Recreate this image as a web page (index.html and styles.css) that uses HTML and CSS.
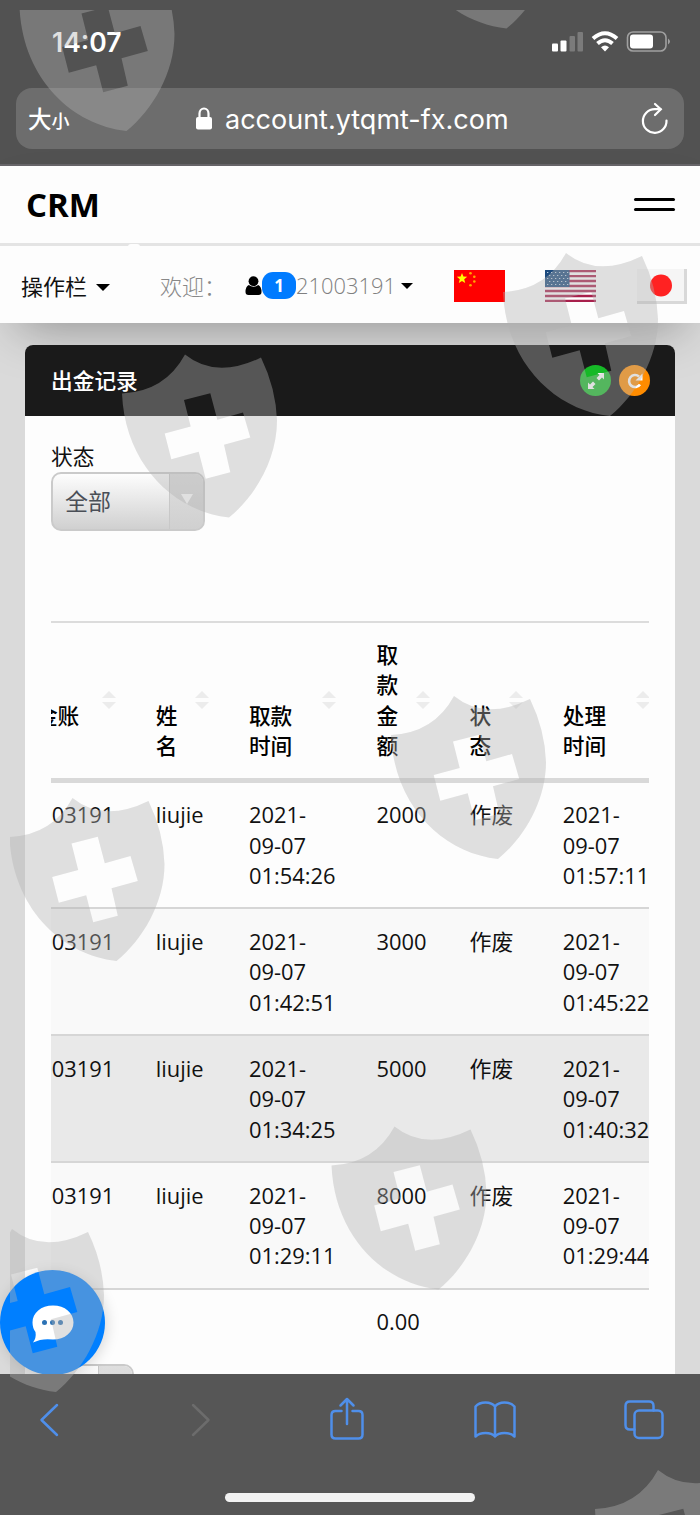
FILE: index.html
```html
<!DOCTYPE html>
<html lang="zh-CN">

<head>
    <meta charset="UTF-8" />
    <title>CRM - 出金记录</title>
    <meta name="viewport" content="width=device-width, initial-scale=1.0" />
    <link rel="stylesheet" href="styles.css">
</head>

<body>
    <div class="phone">
        <header class="browser-top">
            <div class="status-bar">
                <span class="clock">14:07</span>
                <svg class="status-icons" width="120" height="24" viewBox="0 0 120 24">
                    <rect x="2" y="13.500" width="6" height="8" rx="1" fill="#fff" />
                    <rect x="10.500" y="10.500" width="6" height="11" rx="1" fill="#fff" />
                    <rect x="19.500" y="6" width="5.500" height="15.500" rx="1" fill="#7b7b7b" />
                    <rect x="27.500" y="2" width="5.500" height="19.500" rx="1" fill="#7b7b7b" />
                    <g fill="none" stroke="#fff" stroke-width="4">
                        <path d="M43 8.500Q55 -2 67 8.500" />
                        <path d="M47.500 13.500Q55 7 62.500 13.500" />
                    </g>
                    <path d="M51 17.200Q55 14 59 17.200L55 21.500Z" fill="#fff" />
                    <rect x="77.500" y="2" width="38.500" height="19" rx="5.500" fill="none" stroke="#a0a0a0" stroke-width="1.600" />
                    <rect x="80" y="4.500" width="23" height="14" rx="3" fill="#fff" />
                    <path d="M118 8.500q4 3 0 6z" fill="#a0a0a0" />
                </svg>
            </div>
            <div class="address-bar">
                <span class="text-size">大<small>小</small></span>
                <div class="address">
                    <svg width="18" height="24" viewBox="0 0 18 24">
                        <path d="M4.500 11V6.500a4.500 5 0 0 1 9 0V11" fill="none" stroke="#fff" stroke-width="2.200" />
                        <rect x="1" y="10" width="16" height="12.500" rx="2" fill="#fff" />
                    </svg>
                    <span class="url">account.ytqmt-fx.com</span>
                </div>
                <svg class="reload" width="30" height="34" viewBox="0 0 30 34">
                    <g fill="none" stroke="#fff" stroke-width="2.200" stroke-linecap="round">
                        <path d="M26.500 18.500A11.800 11.800 0 1 1 14.700 7.200H20.500" />
                        <path d="M15 2L20.800 7.300L15 13" />
                    </g>
                </svg>
            </div>
        </header>

        <nav class="navbar">
            <div class="brand-row">
                <span class="brand">CRM</span>
                <div class="hamburger"><i></i><i></i></div>
            </div>
            <div class="menu-row">
                <span class="menu-item">操作栏<i class="caret"></i></span>
                <span class="welcome">欢迎：</span>
                <span class="user">
                    <svg width="17" height="20" viewBox="0 0 17 20">
                        <circle cx="8.500" cy="5.200" r="4.900" />
                        <path d="M3.800 9q4.700 3.500 9.400 0Q16.500 10.500 16.500 16q0 3-3 3h-10q-3 0-3-3Q.5 10.500 3.800 9z" />
                    </svg>
                    <b class="badge">1</b><span class="account">21003191</span><i class="caret"></i>
                </span>
                <div class="flags">
                    <svg width="51" height="32" viewBox="0 0 51 32">
                        <path fill="#f00" d="M0 0h51v32H0z" />
                        <path fill="#ff0" d="M8 3l1.400 3.600 3.800.2-3 2.400 1 3.800L8 10.900 4.800 13l1-3.800-3-2.400 3.800-.2z" />
                        <g fill="#ffa800">
                            <circle cx="16.500" cy="3.300" r="1.300" />
                            <circle cx="20.300" cy="6.800" r="1.300" />
                            <circle cx="20.300" cy="11.500" r="1.300" />
                            <circle cx="16.500" cy="15.300" r="1.300" />
                        </g>
                    </svg>
                    <svg width="51" height="32" viewBox="0 0 51 32">
                        <path fill="#fff" d="M0 0h51v32H0z" />
                        <path stroke="#a8204c" stroke-width="2.300" d="M0 1.200h51M0 6.100h51M0 11h51M0 16h51M0 21h51M0 26h51M0 30.900h51" />
                        <path fill="#1d4b7e" d="M0 0h24.500v17H0z" />
                        <path stroke="#b9cbdc" stroke-width="1.200" stroke-dasharray="1.300 2.700" d="M2 2.500h22M4 5.500h20M2 8.500h22M4 11.500h20M2 14.500h22" />
                    </svg>
                    <svg width="51" height="36" viewBox="0 0 51 36">
                        <path fill="#d8d8d8" d="M1 1h50v35H1z" />
                        <path fill="#f5f5f5" d="M1 1h47v32H1z" />
                        <circle cx="25" cy="17.500" r="11" fill="#f22" />
                    </svg>
                </div>
            </div>
        </nav>

        <main class="content">
            <section class="card">
                <div class="card-head">
                    <h1>出金记录</h1>
                    <div class="tools">
                        <span class="tool tool-expand">
                            <svg width="18" height="18" viewBox="0 0 18 18">
                                <path d="M10.500 1H17v6.500l-2-2-3 3-2.500-2.500 3-3zM7.500 17H1v-6.500l2 2 3-3L8.500 12l-3 3z" fill="#fff" />
                            </svg>
                        </span>
                        <span class="tool tool-reload">
                            <svg width="18" height="18" viewBox="0 0 18 18">
                                <path d="M14 12.500A6 6 0 1 1 13 4.500" fill="none" stroke="#fff" stroke-width="2.600" />
                                <path d="M16.500 1.500V8.500H9.500z" fill="#fff" />
                            </svg>
                        </span>
                    </div>
                </div>
                <div class="card-body">
                    <label class="filter-label">状态</label>
                    <div class="select"><span>全部</span><i></i></div>

                    <div class="table-wrap">
                        <table>
                            <colgroup>
                                <col class="c-account"><col class="c-short"><col class="c-time">
                                <col class="c-short"><col class="c-short"><col class="c-time">
                            </colgroup>
                            <thead>
                                <tr>
                                    <th>出金账<br>号</th>
                                    <th>姓<br>名</th>
                                    <th>取款<br>时间</th>
                                    <th>取<br>款<br>金<br>额</th>
                                    <th>状<br>态</th>
                                    <th>处理<br>时间</th>
                                </tr>
                            </thead>
                            <tbody>
                                <tr>
                                    <td>21003191</td>
                                    <td>liujie</td>
                                    <td>2021-<br>09-07<br>01:54:26</td>
                                    <td>2000</td>
                                    <td>作废</td>
                                    <td>2021-<br>09-07<br>01:57:11</td>
                                </tr>
                                <tr class="even">
                                    <td>21003191</td>
                                    <td>liujie</td>
                                    <td>2021-<br>09-07<br>01:42:51</td>
                                    <td>3000</td>
                                    <td>作废</td>
                                    <td>2021-<br>09-07<br>01:45:22</td>
                                </tr>
                                <tr class="active">
                                    <td>21003191</td>
                                    <td>liujie</td>
                                    <td>2021-<br>09-07<br>01:34:25</td>
                                    <td>5000</td>
                                    <td>作废</td>
                                    <td>2021-<br>09-07<br>01:40:32</td>
                                </tr>
                                <tr class="even">
                                    <td>21003191</td>
                                    <td>liujie</td>
                                    <td>2021-<br>09-07<br>01:29:11</td>
                                    <td>8000</td>
                                    <td>作废</td>
                                    <td>2021-<br>09-07<br>01:29:44</td>
                                </tr>
                            </tbody>
                            <tfoot>
                                <tr>
                                    <td></td>
                                    <td></td>
                                    <td></td>
                                    <td>0.00</td>
                                    <td></td>
                                    <td></td>
                                </tr>
                            </tfoot>
                        </table>
                    </div>
                    <div class="select page-size"><span></span><i></i></div>
                </div>
            </section>

            <div class="chat-button">
                <svg width="42" height="38" viewBox="0 0 42 38">
                    <path d="M21 .5C33 .5 41.500 8 41.500 17.500S33 34.500 21 34.500Q10 33 1 37.500Q4.500 33 3.500 27Q.5 23 .5 17.500C.5 8 9 .5 21 .5z" fill="#fff" />
                    <g fill="#2c72b5">
                        <circle cx="12.500" cy="17.500" r="2.500" />
                        <circle cx="20.500" cy="17.500" r="2.500" />
                        <circle cx="28.500" cy="17.500" r="2.500" />
                    </g>
                </svg>
            </div>
        </main>

        <footer class="browser-bottom">
            <div class="toolbar">
                <svg class="back" width="20" height="34" viewBox="0 0 20 34"><path d="M18 2L2.500 17L18 32" /></svg>
                <svg class="forward" width="20" height="34" viewBox="0 0 20 34"><path d="M2 2L17.500 17L2 32" /></svg>
                <svg class="share" width="34" height="44" viewBox="0 0 34 44">
                    <path d="M11.500 14H5.500Q1.500 14 1.500 18V37.500Q1.500 41.500 5.500 41.500H28.500Q32.500 41.500 32.500 37.500V18Q32.500 14 28.500 14H22.500M17 27V2M10.500 8.500L17 2L23.500 8.500" />
                </svg>
                <svg class="bookmarks" width="42" height="38" viewBox="0 0 42 38">
                    <path d="M21 5.500V35.500M21 5.500Q18 1.500 11.500 1.500Q5 1.500 1.500 5.500V35.500Q5 32 11.500 32Q18 32 21 35.500Q24 32 30.500 32Q37 32 40.500 35.500V5.500Q37 1.500 30.500 1.500Q24 1.500 21 5.500z" />
                </svg>
                <svg class="tabs" width="40" height="40" viewBox="0 0 40 40">
                    <rect x="10.500" y="10.500" width="28" height="27.500" rx="4.500" />
                    <path d="M10.500 29.500H6Q1.500 29.500 1.500 25V6Q1.500 1.500 6 1.500H25Q29.500 1.500 29.500 6V10.500" />
                </svg>
            </div>
            <div class="home-indicator"></div>
        </footer>

        <!-- shield watermark over the whole screen -->
        <svg class="watermark" width="700" height="1515" viewBox="0 0 700 1515">
            <defs>
                <clipPath id="inset"><rect x="10" y="10" width="690" height="1505" /></clipPath>
                <path id="shield" fill-rule="evenodd" d="M0 39Q43 37 63 0Q94 25 139 3Q154 34 155 66C155 105 133 142 107 163C52 157 3 110 0 39z
                    M62 45.500L88.300 38.700L95.300 65.300L121 58L128.300 83L102 90.300L108.300 117.700L83.700 124.300L76.700 97.300L49.300 104.700L42.700 79L68.700 72z" />
            </defs>
            <g clip-path="url(#inset)">
                <use href="#shield" x="19.500" y="-32" />
                <use href="#shield" x="399.500" y="-134.500" />
                <use href="#shield" x="503" y="253" />
                <use href="#shield" x="122" y="354.500" />
                <use href="#shield" x="391" y="696" />
                <use href="#shield" x="9.500" y="798" />
                <use href="#shield" x="331.500" y="1126.500" />
                <use href="#shield" x="-51" y="1229" />
                <use href="#shield" x="595" y="1470" />
            </g>
        </svg>
    </div>
</body>

</html>
```
FILE: styles.css
```css
* {
    box-sizing: border-box;
}

body {
    margin: 0;
    font-family: "Open Sans", "Noto Sans CJK SC", sans-serif;
    font-size: 22px;
    color: #111;
}

svg {
    display: block;
    flex: none;
}

.phone {
    position: relative;
    display: flex;
    flex-direction: column;
    width: 700px;
    height: 1515px;
    overflow: hidden;
}

/* Browser chrome, top */
.browser-top {
    flex: none;
    height: 166px;
    padding: 0 16px;
    background: #525252;
    border-bottom: 2px solid #68666a;
    color: #fff;
}

.status-bar {
    display: flex;
    align-items: center;
    justify-content: space-between;
    height: 88px;
    padding: 0 14px 4px 36px;
}

.clock {
    font: 600 26.500px/32px Inter, sans-serif;
}

.address-bar {
    display: flex;
    align-items: center;
    height: 61px;
    padding: 0 14px 0 12px;
    background: #6d6d6d;
    border-radius: 16px;
}

.text-size {
    width: 167px;
    padding-top: 1px;
    font: 500 23.500px/32px "Noto Sans CJK SC", sans-serif;
}

.text-size small {
    font-size: 18px;
}

.address {
    display: flex;
    flex: 1;
    align-items: center;
    gap: 12px;
}

.url {
    padding-top: 2px;
    font: 400 27px/34px Inter, sans-serif;
    white-space: nowrap;
}

/* Page navbar */
.navbar {
    position: relative;
    z-index: 1;
    flex: none;
    height: 157px;
    background: #fdfdfd;
    box-shadow: 0 22px 50px -18px rgba(0, 0, 0, .35);
}

.brand-row {
    position: relative;
    display: flex;
    align-items: center;
    justify-content: space-between;
    height: 80px;
    padding: 0 25px 0 26px;
    border-bottom: 3px solid #e4e4e4;
}

/* tip of the collapsed menu */
.brand-row::after {
    content: "";
    position: absolute;
    left: 128px;
    bottom: -4px;
    width: 12px;
    height: 3px;
    border-radius: 6px 6px 0 0;
    background: #fdfdfd;
}

.brand {
    font-size: 33px;
    font-weight: 700;
    line-height: 48px;
    color: #000;
    padding-top: 1px;
}

.hamburger {
    display: flex;
    flex-direction: column;
    gap: 7px;
}

.hamburger i {
    width: 41px;
    height: 3px;
    border-radius: 2px;
    background: #000;
}

.menu-row {
    display: flex;
    align-items: center;
    height: 77px;
    padding: 2px 13px 0 21px;
    line-height: 30px;
    white-space: nowrap;
}

.menu-item {
    display: flex;
    align-items: center;
    gap: 9px;
    width: 139px;
}

.caret {
    position: relative;
    top: 2px;
    border: 7px solid transparent;
    border-top-color: #000;
    border-bottom: 0;
}

.user .caret {
    top: 0;
    border-width: 6.500px;
    border-bottom: 0;
}

.welcome {
    width: 85px;
    color: #888;
    font-weight: 300;
}

.user {
    display: flex;
    align-items: center;
    width: 209px;
}

.badge {
    width: 34px;
    height: 27px;
    border-radius: 11px;
    background: #007bff;
    color: #fff;
    font-size: 17px;
    line-height: 27px;
    text-align: center;
}

.account {
    margin-right: 5px;
    color: #808080;
    font-size: 21.900px;
    font-weight: 300;
}

.flags {
    display: flex;
    flex: 1;
    align-items: center;
    justify-content: space-between;
}

/* Content */
.content {
    position: relative;
    flex: 1;
    min-height: 0;
    padding: 22px 25px 0;
    background: #dadada;
}

.card {
    position: relative;
    z-index: 2;
    height: 1029px;
    border-radius: 8px 8px 0 0;
    background: #fdfdfd;
    overflow: hidden;
}

.card-head {
    display: flex;
    align-items: center;
    justify-content: space-between;
    height: 71px;
    padding: 0 25px 0 26px;
    background: #1a1a1a;
    color: #fff;
}

.card-head h1 {
    margin: 0 0 2px;
    font-size: 21.700px;
    font-weight: 500;
}

.tools {
    display: flex;
    gap: 8px;
}

.tool {
    display: flex;
    align-items: center;
    justify-content: center;
    width: 31px;
    height: 31px;
    border-radius: 50%;
}

.tool-expand {
    background: #16b927;
}

.tool-reload {
    background: #ff8c00;
}

.card-body {
    padding: 26px 26px 0;
}

.filter-label {
    display: block;
    height: 30px;
    font-size: 21.700px;
    line-height: 30px;
}

.select {
    display: flex;
    width: 154px;
    height: 59px;
    border: 2px solid #cacaca;
    border-radius: 10px;
    background: linear-gradient(#fdfdfd, #d0d0d0);
    color: #4a4f57;
    font-size: 23px;
    line-height: 55px;
    overflow: hidden;
}

.select span {
    flex: 1;
    padding-left: 12px;
}

.select i {
    display: flex;
    align-items: center;
    justify-content: center;
    width: 34px;
    padding-bottom: 6px;
    border-left: 1px solid #c8c8c8;
    background: linear-gradient(#dedede, #d0d0d0);
}

.select i::after {
    content: "";
    border: 6px solid transparent;
    border-top: 10px solid #fff;
    border-bottom: 0;
}

/* Records table, scrolled sideways inside its wrapper */
.table-wrap {
    width: 598px;
    height: 730px;
    margin-top: 90px;
    overflow: hidden;
}

table {
    width: 677.600px;
    margin-left: -55.300px;
    table-layout: fixed;
    border-collapse: separate;
    border-spacing: 0;
    font-size: 21.900px;
    line-height: 30.400px;
}

.c-account {
    width: 143px;
}

.c-short {
    width: 93.200px;
}

.c-time {
    width: 127.500px;
}

th,
td {
    padding: 17.600px 0 16px 17px;
    text-align: left;
    vertical-align: top;
    white-space: nowrap;
}

th:first-child,
td:first-child {
    padding-left: 18.500px;
}

th {
    position: relative;
    padding-top: 17px;
    border-top: 2px solid #dcdcdc;
    border-bottom: 5px solid #d9d9d9;
    color: #000;
    font-size: 21.700px;
    font-weight: 500;
    vertical-align: bottom;
}

/* sort arrows */
th::before,
th::after {
    content: "";
    position: absolute;
    right: 23px;
    border: 7px solid transparent;
}

th::before {
    bottom: 80px;
    border-top: 0;
    border-bottom: 7px solid #ececec;
}

th::after {
    bottom: 69px;
    border-bottom: 0;
    border-top: 7px solid #ececec;
}

tbody td {
    border-bottom: 2px solid #d6d6d6;
}

.even td {
    background: #f9f9f9;
}

.active td {
    background: #e9e9e9;
}

.page-size {
    width: 83px;
    margin-top: 13px;
}

.chat-button {
    position: absolute;
    left: 0;
    bottom: -1px;
    z-index: 3;
    display: flex;
    align-items: center;
    justify-content: center;
    width: 105px;
    height: 105px;
    padding-top: 3px;
    border-radius: 50%;
    background: #007fff;
    box-shadow: 2px 2px 14px rgba(0, 0, 0, .15);
}

/* Browser chrome, bottom */
.browser-bottom {
    position: relative;
    z-index: 4;
    flex: none;
    height: 141px;
    background: #565656;
}

.toolbar {
    display: flex;
    align-items: center;
    height: 92px;
    padding-left: 39px;
}

.toolbar path,
.toolbar rect {
    fill: none;
    stroke: #4f8fea;
    stroke-width: 2.500;
    stroke-linecap: round;
    stroke-linejoin: round;
}

.toolbar .forward {
    margin-left: 132px;
}

.toolbar .forward path {
    stroke: #6c6c6c;
}

.toolbar .share {
    margin-left: 119px;
    margin-bottom: 2px;
}

.toolbar .bookmarks {
    margin-left: 110px;
}

.toolbar .tabs {
    margin-left: 108px;
}

.home-indicator {
    width: 250px;
    height: 9px;
    margin: 27px auto 0;
    border-radius: 5px;
    background: #f2f2f2;
}

.watermark {
    position: absolute;
    inset: 0;
    z-index: 10;
    fill: #b1b1b1;
    fill-opacity: .4;
    pointer-events: none;
}
```
